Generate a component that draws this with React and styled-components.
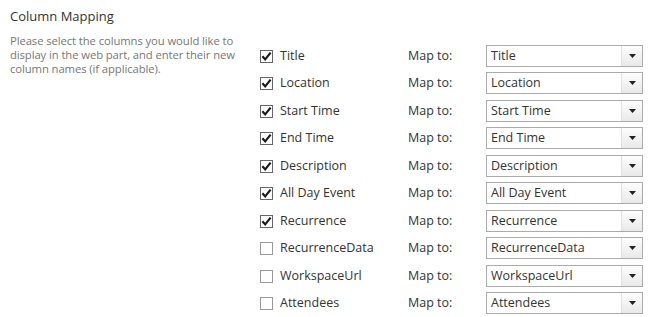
import React from "react"
import styled, { createGlobalStyle } from "styled-components"

const GlobalStyle = createGlobalStyle`
  body {
    margin: 0;
    background: #fff;
    font-family: "Segoe UI", "Open Sans", "Liberation Sans", sans-serif;
  }
`

const Page = styled.div`
  padding: 7px 0 0 10px;
  width: 649px;
  height: 317px;
  box-sizing: border-box;
  overflow: hidden;
`

const Heading = styled.div`
  font-size: 13px;
  line-height: 18px;
  color: #333;
`

const Body = styled.div`
  display: flex;
  margin-top: 9px;
`

const Description = styled.div`
  width: 250px;
  flex: none;
  font-size: 11.3px;
  line-height: 14px;
  color: #777;
  white-space: nowrap;
  letter-spacing: -0.1px;
`

const Rows = styled.div`
  display: flex;
  flex-direction: column;
  padding-top: 11px;
`

const Row = styled.div`
  display: grid;
  grid-template-columns: 20px 128px 78px 157px;
  align-items: center;
  height: 22px;
  margin-bottom: 5px;
  font-size: 12.5px;
  color: #333;
  &:nth-child(even) {
    margin-bottom: 6px;
  }
`

const Box = styled.span`
  display: flex;
  width: 13px;
  height: 13px;
`

const Label = styled.span`
  line-height: 22px;
`

const Select = styled.div`
  display: flex;
  height: 22px;
  box-sizing: border-box;
  border: 1px solid #ababab;
  background: #fff;
`

const SelectText = styled.span`
  flex: 1;
  padding-left: 4px;
  line-height: 20px;
  color: #333;
  font-size: 12.5px;
`

const Arrow = styled.span`
  width: 20px;
  display: flex;
  align-items: center;
  justify-content: center;
  border-left: 1px solid #e1e1e1;
  background: linear-gradient(#fdfdfd, #e9e9e9);
`

const Check = ({ checked }) => (
  <Box>
    <svg width="13" height="13" viewBox="0 0 13 13">
      <rect x="0.5" y="0.5" width="12" height="12" fill="#fff" stroke={checked ? "#666" : "#999"} />
      {checked && (
        <path d="M2.4 6.2 L5.2 9.4 L10.6 2.6" fill="none" stroke="#1a1a1a" strokeWidth="2.2" />
      )}
    </svg>
  </Box>
)

const columns = [
  ["Title", true],
  ["Location", true],
  ["Start Time", true],
  ["End Time", true],
  ["Description", true],
  ["All Day Event", true],
  ["Recurrence", true],
  ["RecurrenceData", false],
  ["WorkspaceUrl", false],
  ["Attendees", false],
]

export default function App() {
  return (
    <Page>
      <GlobalStyle />
      <Heading>Column Mapping</Heading>
      <Body>
        <Description>
          Please select the columns you would like to
          <br />
          display in the web part, and enter their new
          <br />
          column names (if applicable).
        </Description>
        <Rows>
          {columns.map(([name, checked]) => (
            <Row key={name}>
              <Check checked={checked} />
              <Label>{name}</Label>
              <Label>Map to:</Label>
              <Select>
                <SelectText>{name}</SelectText>
                <Arrow>
                  <svg width="7" height="4" viewBox="0 0 7 4">
                    <path d="M0 0 H7 L3.5 4 Z" fill="#222" />
                  </svg>
                </Arrow>
              </Select>
            </Row>
          ))}
        </Rows>
      </Body>
    </Page>
  )
}
